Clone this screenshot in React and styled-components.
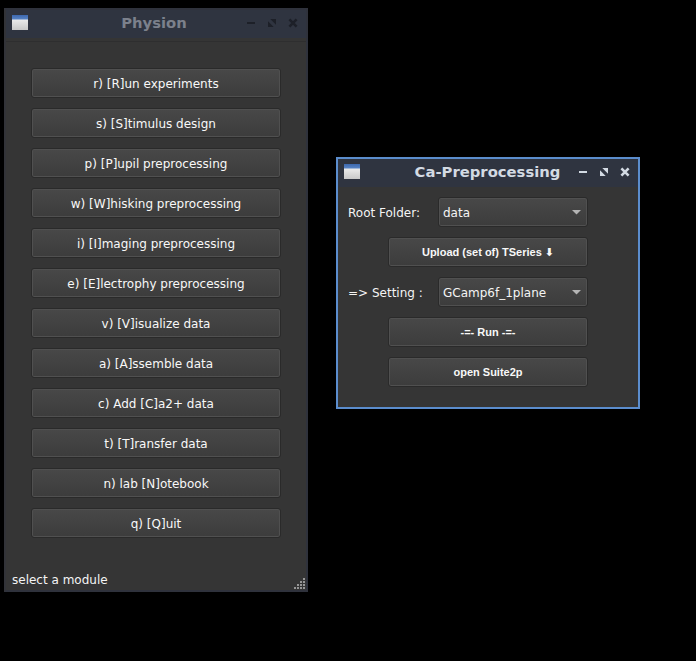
import React from "react";
import styled, { createGlobalStyle, css } from "styled-components";

const GlobalStyle = createGlobalStyle`
  html, body { margin: 0; background: #000; }
  * { box-sizing: border-box; }
`;

const Desktop = styled.main`
  display: flex;
  align-items: flex-start;
  gap: 28px;
  width: 696px;
  height: 661px;
  padding: 8px 4px;
  overflow: hidden;
  background: #000;
  color: #f4f4f4;
  font: 12px/16px "DejaVu Sans", sans-serif;
`;

const Window = styled.section`
  display: flex;
  flex-direction: column;
  flex: none;
  width: 304px;
  height: ${(p) => p.$height}px;
  margin-top: ${(p) => p.$top || 0}px;
  border: 2px solid ${(p) => (p.$active ? "#5b8dcd" : "#2f323c")};
  ${(p) => !p.$active && css`border-left-color: #323338;`}
  background: #353535;
`;

const TitleBar = styled.header`
  display: flex;
  align-items: center;
  flex: none;
  height: 28px;
  padding: 0 7px 2px 6px;
  background: #2f3440;
  color: ${(p) => (p.$active ? "#d3dae3" : "#7c818c")};
`;

const Title = styled.h1`
  flex: 1;
  margin: 0;
  padding-left: ${(p) => p.$shift}px;
  text-align: center;
  white-space: nowrap;
  font: bold 14.8px/20px "DejaVu Sans", sans-serif;
`;

const AppIcon = styled.span`
  width: 16px;
  height: 15px;
  margin-bottom: 2px;
  background: linear-gradient(#3d68ae 0, #5682c4 4px, #eaeaea 5px, #c9c9c9 100%);
`;

const Controls = styled.svg`
  display: block;
  width: 54px;
  height: 12px;
  color: ${(p) => (p.$active ? "#d3dae3" : "#1d2028")};
`;

const MenuBody = styled.div`
  display: flex;
  flex-direction: column;
  align-items: center;
  flex: 1;
  gap: 10px;
  padding-top: 26px;
  border-top: 1px solid #2e2e2f;
  margin-top: 3px;
`;

const Button = styled.button`
  width: ${(p) => p.$width}px;
  height: 30px;
  padding: ${(p) => (p.$strong ? 0 : "2px 0 0")};
  border: 1px solid #2a2a2a;
  border-radius: 3px;
  background: linear-gradient(#484848, #3c3c3c);
  box-shadow: inset 0 0 0 1px #505050;
  color: #f8f8f8;
  font: ${(p) => (p.$strong ? 'bold 11px/16px "Liberation Sans"' : '12px/16px "DejaVu Sans"')}, "DejaVu Sans", sans-serif;
`;

const StatusBar = styled.footer`
  display: flex;
  justify-content: space-between;
  align-items: flex-end;
  height: 24px;
  padding: 0 0 0 6px;
`;

const Status = styled.span`
  padding-bottom: 2px;
`;

const Grip = styled.svg`
  width: 12px;
  height: 12px;
  fill: #969696;
`;

const Form = styled.div`
  display: grid;
  grid-template-columns: 90px 150px;
  grid-auto-rows: 30px;
  gap: 10px 0;
  padding: 10px 0 0 10px;
`;

const Label = styled.label`
  align-self: center;
  padding-top: 2px;
`;

const ActionRow = styled.div`
  grid-column: 1 / -1;
  display: flex;
  justify-content: flex-end;
`;

const Select = styled.div`
  display: flex;
  align-items: center;
  justify-content: space-between;
  padding: 2px 6px 0 4px;
  border: 1px solid #2a2a2a;
  border-radius: 3px;
  background: linear-gradient(#484848, #3c3c3c);
  box-shadow: inset 0 0 0 1px #505050;
`;

const Arrow = styled.svg`
  width: 9px;
  height: 5px;
  fill: #b4b4b4;
  margin-bottom: 1px;
`;

function WindowTitle({ active, shift, children }) {
  return (
    <TitleBar $active={active}>
      <AppIcon />
      <Title $shift={shift}>{children}</Title>
      <Controls $active={active} viewBox="0 0 54 12">
        <path d="M2 5H10V7H2Z" fill="currentColor" />
        <path d="M25.3 2H31V7.7ZM23 4.3V10H28.7Z" fill="currentColor" />
        <path d="M44.4 2.4L51.6 9.6M51.6 2.4L44.4 9.6" stroke="currentColor" strokeWidth="2.6" />
      </Controls>
    </TitleBar>
  );
}

function Combo({ children }) {
  return (
    <Select>
      <span>{children}</span>
      <Arrow viewBox="0 0 9 5"><path d="M0 0H9L4.5 4.5Z" /></Arrow>
    </Select>
  );
}

const modules = [
  "r) [R]un experiments",
  "s) [S]timulus design",
  "p) [P]upil preprocessing",
  "w) [W]hisking preprocessing",
  "i) [I]maging preprocessing",
  "e) [E]lectrophy preprocessing",
  "v) [V]isualize data",
  "a) [A]ssemble data",
  "c) Add [C]a2+ data",
  "t) [T]ransfer data",
  "n) lab [N]otebook",
  "q) [Q]uit",
];

const gripDots = [[9, 0], [6, 3], [9, 3], [3, 6], [6, 6], [9, 6], [0, 9], [3, 9], [6, 9], [9, 9]];

export default function App() {
  return (
    <>
      <GlobalStyle />
      <Desktop>
        <Window $height={584}>
          <WindowTitle shift={35}>Physion</WindowTitle>
          <MenuBody>
            {modules.map((name) => <Button key={name} $width={250}>{name}</Button>)}
          </MenuBody>
          <StatusBar>
            <Status>select a module</Status>
            <Grip viewBox="0 0 12 12">
              {gripDots.map(([x, y]) => <rect key={`${x}-${y}`} x={x} y={y} width="2" height="2" />)}
            </Grip>
          </StatusBar>
        </Window>
        <Window $active $height={252} $top={149}>
          <WindowTitle active shift={38}>Ca-Preprocessing</WindowTitle>
          <Form>
            <Label>Root Folder:</Label>
            <Combo>data</Combo>
            <ActionRow><Button $strong $width={200}>Upload (set of) TSeries ⬇</Button></ActionRow>
            <Label>=&gt; Setting :</Label>
            <Combo>GCamp6f_1plane</Combo>
            <ActionRow><Button $strong $width={200}>-=- Run -=-</Button></ActionRow>
            <ActionRow><Button $strong $width={200}>open Suite2p</Button></ActionRow>
          </Form>
        </Window>
      </Desktop>
    </>
  );
}
